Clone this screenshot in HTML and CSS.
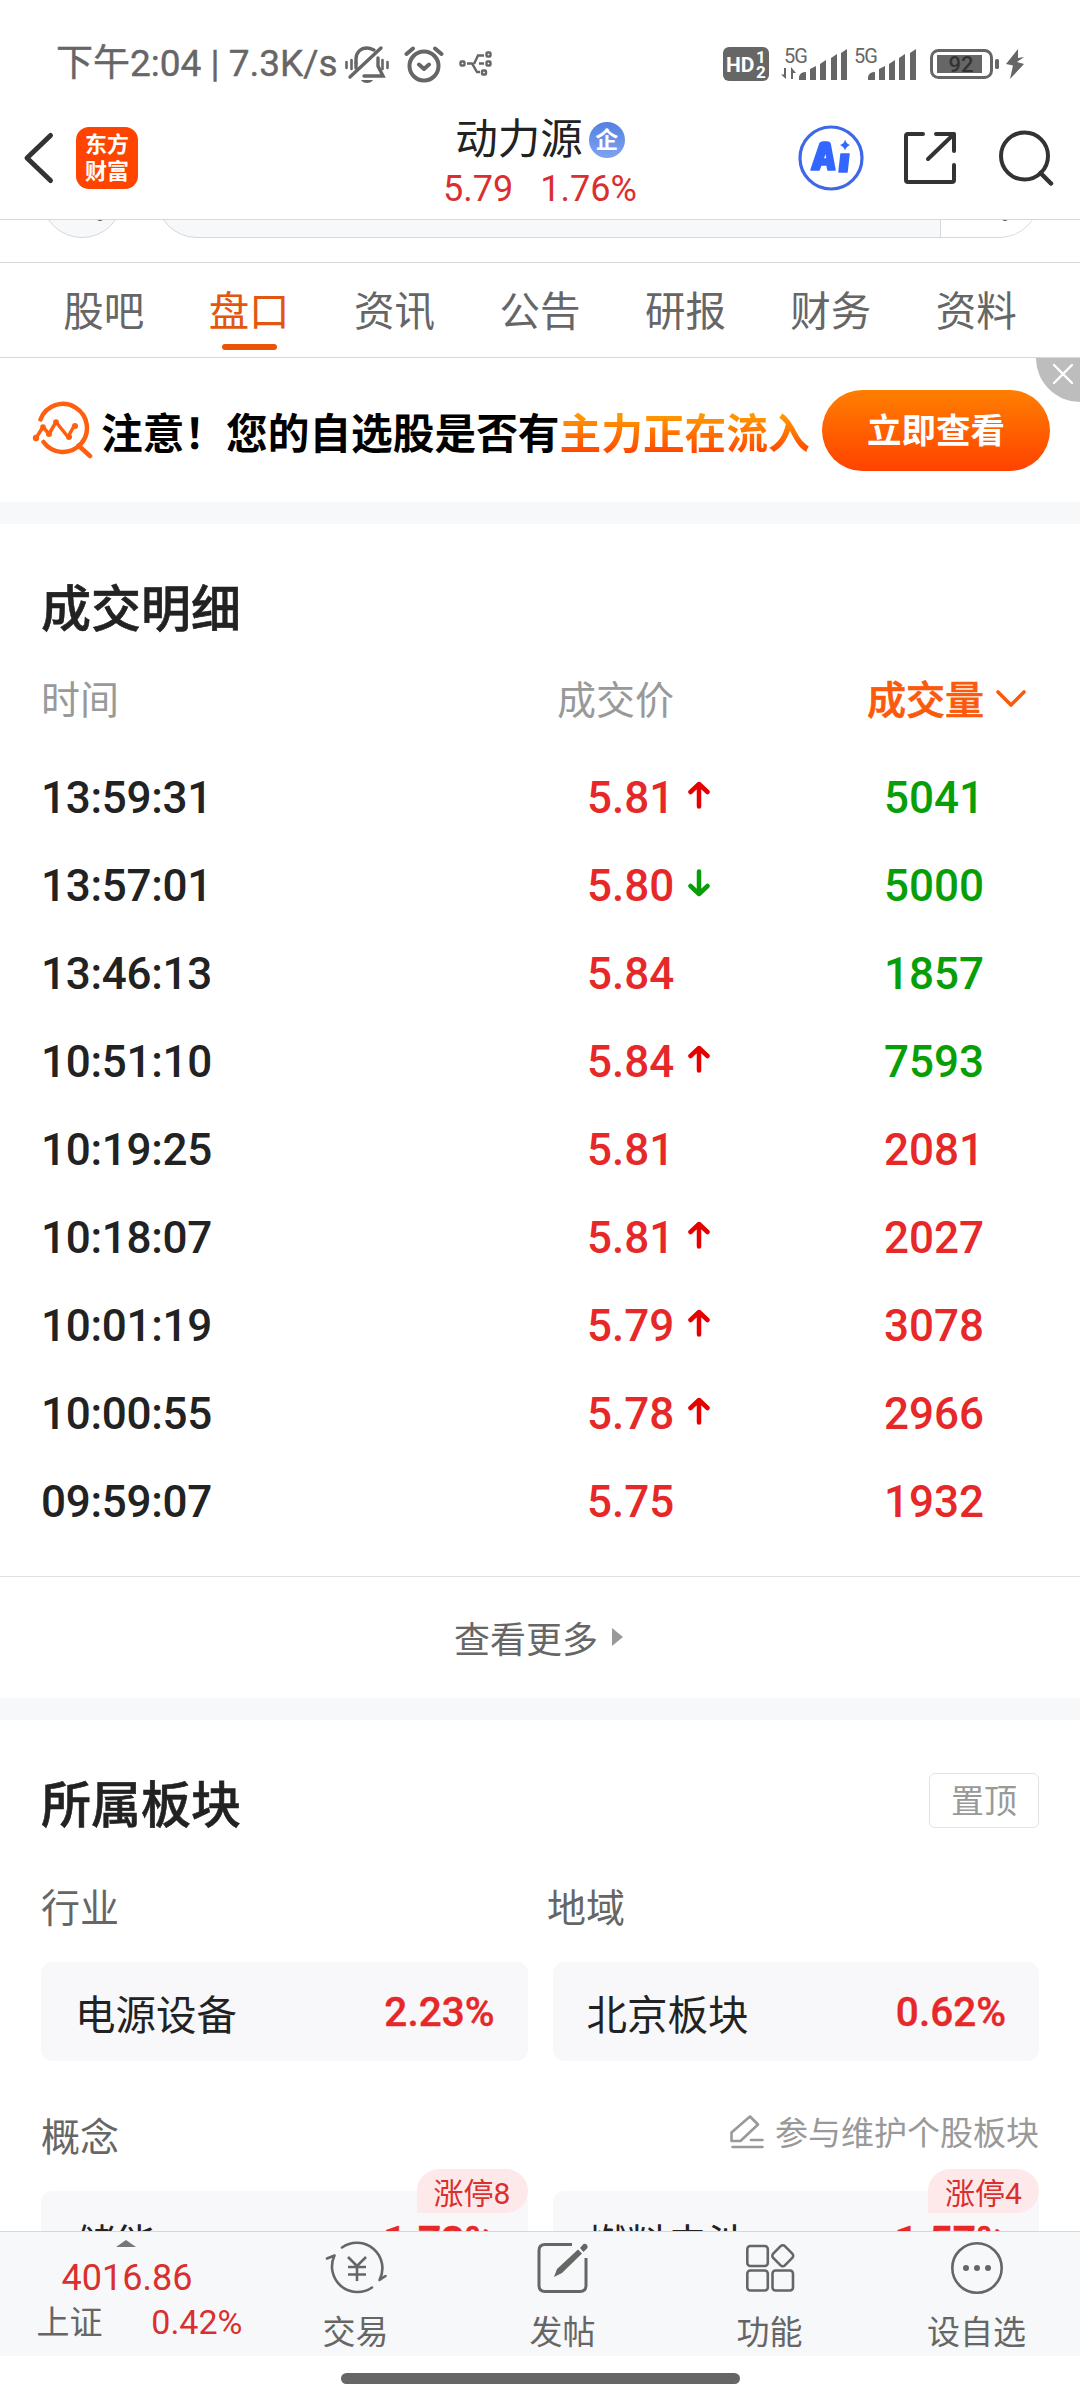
FILE: index.html
```html
<!DOCTYPE html>
<html lang="zh-CN">
  <head>
    <meta charset="UTF-8" />
    <meta name="viewport" content="width=device-width, initial-scale=1.0" />
    <title>动力源</title>
    <link rel="stylesheet" href="styles.css">
  </head>

  <body>
    <!-- 状态栏 -->
    <div class="status">
      <span class="status-text">下午2:04 | 7.3K/s</span>
      <svg class="ico-bell" width="46" height="40" viewBox="0 0 46 40" fill="none" stroke="#666" stroke-width="3.4" stroke-linecap="round">
        <path d="M6 33 37 4" />
        <path d="M12 19v-4c0-7 5-11 11-11 3 0 5 1 7 2" />
        <path d="M34 14v8l5 10H20" />
        <path d="M12 19v5" />
        <path d="M2.500 18v6M7.500 16v9M38.500 16v9M43.500 18v6" stroke-width="2.600" />
        <path d="M17 36h12c-2 4-10 4-12 0z" fill="#666" stroke="none" />
      </svg>
      <svg class="ico-alarm" width="40" height="38" viewBox="0 0 40 38" fill="none" stroke="#666" stroke-width="4" stroke-linecap="round" stroke-linejoin="round">
        <circle cx="20" cy="21" r="14.500" />
        <path d="M15 19.500l5 4.500 5-4.500M2.500 9 9 3.500M37.500 9 31 3.500" />
      </svg>
      <svg class="ico-hub" width="34" height="26" viewBox="0 0 34 26" fill="none" stroke="#666" stroke-width="2.400">
        <rect x="1.500" y="10.500" width="4" height="4" rx="1" />
        <rect x="27.500" y="1.500" width="4" height="4" rx="1" />
        <rect x="27.500" y="10.500" width="4" height="4" rx="1" />
        <rect x="23" y="19.500" width="4" height="4" rx="1" />
        <path d="M8 12.500h5l5 8.500h3M15 13l4-8.500h6M20 12.500h5" />
      </svg>
      <div class="status-right">
        <svg width="46" height="34" viewBox="0 0 46 34">
          <rect width="46" height="34" rx="6" fill="#666" />
          <text x="3" y="25" class="hd-text">HD</text>
          <text x="33" y="16" class="hd-num">1</text>
          <text x="33" y="30.500" class="hd-num">2</text>
        </svg>
        <svg class="ico-signal" width="66" height="34" viewBox="0 0 66 34" fill="#666">
          <text x="3" y="16" class="net-text">5G</text>
          <path d="M5 21v11L0 27.500h3V21zM10 32V20l5 6h-3v6z" />
          <path d="M18 33v-3q1-5 7-5v8zM29 33V22l6-3v14zM39 33V17l6-4v20zM50 33V11l6-4v26zM60 33V6l6-4v31z" />
        </svg>
        <svg class="ico-signal2" width="63" height="34" viewBox="0 0 63 34" fill="#666">
          <text x="0" y="16" class="net-text">5G</text>
          <path d="M14 33v-3q1-5 7-5v8zM25 33V22l6-3v14zM35 33V17l6-4v20zM45 33V11l6-4v26zM56 33V6l6-4v31z" />
        </svg>
        <svg class="ico-battery" width="96" height="32" viewBox="0 0 96 32">
          <rect x="1.500" y="2.500" width="60" height="27" rx="7" fill="none" stroke="#666" stroke-width="3" />
          <rect x="7" y="7" width="45" height="18" fill="#666" />
          <rect x="65" y="11" width="4" height="10" rx="1.500" fill="#666" />
          <text x="18.500" y="24" class="battery-text">92</text>
          <path d="M88 1 76 16l7 1.500L80 31l14-15-7-2 7-5-6 1z" fill="#666" />
        </svg>
      </div>
    </div>

    <!-- 顶部导航 -->
    <header class="header">
      <div class="header-side">
        <svg class="ico-back" width="32" height="54" viewBox="0 0 32 54" fill="none" stroke="#333" stroke-width="5" stroke-linecap="round" stroke-linejoin="round">
          <path d="M27.500 4.500 4 27l23.500 22.500" />
        </svg>
        <div class="logo">东方<br />财富</div>
      </div>
      <div class="stock">
        <div class="stock-name">动力源<span class="badge-co">企</span></div>
        <div class="stock-price"><span>5.79</span><span>1.76%</span></div>
      </div>
      <div class="header-side header-right">
        <svg width="66" height="68" viewBox="0 0 66 68">
          <circle cx="33" cy="34" r="31" fill="none" stroke="#3f68e8" stroke-width="3.200" />
          <path fill="#3366ff" fill-rule="evenodd" stroke="#3366ff" stroke-width="1.500" stroke-linejoin="round" d="M13 46 22 19.500q1-1.500 3-1.500h4q2.500 0 3 1.500L37 46h-7l-1-5h-6l-2 5zM25 35h4l-1-8zM43 30h8l-2 18h-8z" />
          <path fill="#3366ff" d="M47 15.500q1.500 4.500 5 5.500-4 1.500-5 5.500-1-4-5-5.500 4-1 5-5.500z" />
        </svg>
        <svg class="ico-share" width="54" height="54" viewBox="0 0 54 54" fill="none" stroke="#333" stroke-width="4" stroke-linecap="round" stroke-linejoin="round">
          <path d="M20 3H5q-2 0-2 2v44q0 2 2 2h44q2 0 2-2V34M33 3h18v17M51 3 25 28" />
        </svg>
        <svg class="ico-search" width="56" height="56" viewBox="0 0 56 56" fill="none" stroke="#333" stroke-width="4" stroke-linecap="round">
          <circle cx="26.500" cy="26" r="23.500" />
          <path d="M42.500 43 53 53.500" stroke-width="4.500" />
        </svg>
      </div>
    </header>

    <!-- 滚动到一半的工具栏 -->
    <div class="tools">
      <div class="tool-round"><i></i></div>
      <div class="tool-pill">
        <div class="tool-pill-end"><i></i></div>
      </div>
    </div>

    <nav class="tabs">
      <a class="tab">股吧</a>
      <a class="tab on">盘口</a>
      <a class="tab">资讯</a>
      <a class="tab">公告</a>
      <a class="tab">研报</a>
      <a class="tab">财务</a>
      <a class="tab">资料</a>
    </nav>

    <main class="content">
      <div class="banner">
        <svg class="banner-ico" width="62" height="60" viewBox="0 0 62 60" fill="none" stroke="#ff5f0f" stroke-width="4.500" stroke-linecap="round" stroke-linejoin="round">
          <path d="M8.500 18.500a24 24 0 1 1 3 22.500M46.500 44.500 58 55" />
          <path d="M4 37 11 26l6 7 7-12 12 15 6-11" stroke-width="3.500" />
          <g fill="#ff5f0f" stroke="none">
            <circle cx="4" cy="37" r="3.200" />
            <circle cx="11" cy="26" r="2.800" />
            <circle cx="17" cy="33" r="3" />
            <circle cx="24" cy="21" r="2.800" />
            <circle cx="37" cy="36" r="3" />
            <circle cx="43" cy="25" r="3" />
          </g>
        </svg>
        <p class="banner-text">注意！您的自选股是否有<em>主力正在流入</em></p>
        <button type="button" class="banner-btn">立即查看</button>
        <div class="banner-close">
          <svg width="22" height="22" viewBox="0 0 22 22" stroke="#fff" stroke-width="2.400" stroke-linecap="round">
            <path d="M2 2l18 18M20 2 2 20" />
          </svg>
        </div>
      </div>

      <!-- 成交明细 -->
      <section class="card deals">
        <h2>成交明细</h2>
        <div class="deal-row deal-head">
          <span>时间</span>
          <span>成交价</span>
          <span class="sort">成交量
            <svg width="30" height="20" viewBox="0 0 30 20" fill="none" stroke="#fa5a0a" stroke-width="3.600" stroke-linecap="round" stroke-linejoin="round">
              <path d="M2 3l13 13L28 3" />
            </svg>
          </span>
        </div>
        <div id="dealList"></div>
      </section>
      <a class="more">查看更多<i></i></a>

      <!-- 所属板块 -->
      <section class="card plates">
        <div class="plates-head">
          <h2>所属板块</h2>
          <button type="button" class="btn-top">置顶</button>
        </div>
        <div class="labels">
          <span>行业</span>
          <span>地域</span>
        </div>
        <div class="plate-list">
          <div class="plate"><span>电源设备</span><b>2.23%</b></div>
          <div class="plate"><span>北京板块</span><b>0.62%</b></div>
        </div>
        <div class="labels concept">
          <span>概念</span>
          <a class="edit">
            <svg width="34" height="34" viewBox="0 0 34 34" fill="none" stroke="#999" stroke-width="2.600" stroke-linecap="round" stroke-linejoin="round">
              <path d="M1.500 17.500 20 1.500l8 8L10.500 26h-9zM21 25h11.500M2.500 32h30" />
            </svg>参与维护个股板块</a>
        </div>
        <div class="plate-list">
          <div class="plate"><span>储能</span><b class="bold">1.73%</b><i class="limit">涨停8</i></div>
          <div class="plate"><span>燃料电池</span><b class="bold">1.57%</b><i class="limit">涨停4</i></div>
        </div>
      </section>
    </main>

    <!-- 底部栏 -->
    <footer class="bottom">
      <div class="index">
        <i class="index-up"></i>
        <div class="index-num">4016.86</div>
        <div class="index-row"><span>上证</span><span class="red">0.42%</span></div>
      </div>
      <a class="menu">
        <svg width="62" height="56" viewBox="0 0 62 56" fill="none" stroke="#666" stroke-width="2.600" stroke-linecap="round" stroke-linejoin="round">
          <path d="M17 7.500a25.500 25.500 0 0 1 37.500 32.500l6-4M47 47.500A25.500 25.500 0 0 1 9.500 15.500l-7.500 3" />
          <path d="M23 17l9 9 9-9M32 26v15M23 27h18M23 34.500h18" stroke-linecap="butt" />
        </svg>
        <span>交易</span>
      </a>
      <a class="menu">
        <svg width="54" height="56" viewBox="0 0 54 56" fill="none" stroke="#666" stroke-width="3">
          <path d="M36 4.500H9q-6 0-6 6v35q0 6 6 6h35q6 0 6-6V18" />
          <path d="M18 37l3-8L42 9.500l4 4L26 33z" fill="#666" stroke="none" />
          <path d="M44 8l3.500-4q2-1 3.500 1t0 3.500L47.500 12z" fill="#666" stroke="none" />
        </svg>
        <span>发帖</span>
      </a>
      <a class="menu">
        <svg width="52" height="56" viewBox="0 0 52 56" fill="none" stroke="#666" stroke-width="2.600">
          <rect x="3.300" y="6" width="20.500" height="20" rx="3" />
          <rect x="3.300" y="30.500" width="20.500" height="20" rx="3" />
          <rect x="28.500" y="30.500" width="20.500" height="20" rx="3" />
          <rect x="30.500" y="7.500" width="16.500" height="16.500" rx="3" transform="rotate(45 38.750 15.750)" />
        </svg>
        <span>功能</span>
      </a>
      <a class="menu">
        <svg width="54" height="56" viewBox="0 0 54 56" fill="#666">
          <circle cx="27" cy="28" r="24.700" fill="none" stroke="#666" stroke-width="2.600" />
          <circle cx="16" cy="28" r="3" />
          <circle cx="27" cy="28" r="3" />
          <circle cx="38" cy="28" r="3" />
        </svg>
        <span>设自选</span>
      </a>
    </footer>
    <div class="home"><i></i></div>

    <script>
      // [时间, 成交价, 箭头, 成交量, 买卖方向]
      const deals = [
        ["13:59:31", "5.81", "up", "5041", "green"],
        ["13:57:01", "5.80", "down", "5000", "green"],
        ["13:46:13", "5.84", "", "1857", "green"],
        ["10:51:10", "5.84", "up", "7593", "green"],
        ["10:19:25", "5.81", "", "2081", "red"],
        ["10:18:07", "5.81", "up", "2027", "red"],
        ["10:01:19", "5.79", "up", "3078", "red"],
        ["10:00:55", "5.78", "up", "2966", "red"],
        ["09:59:07", "5.75", "", "1932", "red"],
      ];

      const arrow = function (type) {
        if (!type) return "";
        return `<svg class="arrow ${type}" width="22" height="28" viewBox="0 0 22 28"><path d="M11 25.500V3M2.500 11 11 3l8.500 8" /></svg>`;
      };

      document.querySelector("#dealList").innerHTML = deals
        .map(
          ([time, price, type, volume, color]) => `
        <div class="deal-row">
          <span class="time">${time}</span>
          <span class="price"><b>${price}</b>${arrow(type)}</span>
          <span class="volume ${color}">${volume}</span>
        </div>`
        )
        .join("");
    </script>
  </body>
</html>
```

FILE: styles.css
```css
* {
  box-sizing: border-box;
}

body {
  margin: 0;
  width: 1080px;
  height: 2400px;
  overflow: hidden;
  display: flex;
  flex-direction: column;
  background: #fff;
  color: #222;
  font-family: Roboto, "Noto Sans CJK SC", sans-serif;
}

h2,
p {
  margin: 0;
}

i,
em {
  font-style: normal;
}

svg {
  display: block;
  flex: none;
}

button {
  border: none;
  font-family: inherit;
  padding: 0;
}

.red {
  color: #e62828;
}

.green {
  color: #079e07;
}

/* 状态栏 */
.status {
  flex: none;
  height: 84px;
  padding: 44px 54px 0 56px;
  display: flex;
  align-items: center;
  color: #666;
}

.status-text {
  width: 288px;
  font-size: 37px;
  line-height: 40px;
  white-space: nowrap;
  -webkit-text-stroke: 0.4px #666;
}

.ico-alarm {
  margin-left: 14px;
}

.ico-hub {
  margin-left: 15px;
}

.status-right {
  margin-left: auto;
  display: flex;
  align-items: center;
}

.ico-signal {
  margin-left: 12px;
}

.ico-signal2 {
  margin-left: 7px;
}

.ico-battery {
  margin-left: 13px;
}

.hd-text {
  font: 700 21px Roboto;
  fill: #fff;
}

.hd-num {
  font: 700 17px Roboto;
  fill: #fff;
}

.net-text {
  font: 20px Roboto;
  letter-spacing: -1px;
}

.battery-text {
  font: 500 22px Roboto;
  fill: #333;
}

/* 顶部导航 */
.header {
  flex: none;
  height: 136px;
  padding: 13px 26px 0 23px;
  border-bottom: 1px solid #d5d7da;
  display: flex;
  align-items: center;
  justify-content: space-between;
}

.header-side {
  width: 256px;
  display: flex;
  align-items: center;
}

.header-right {
  justify-content: flex-end;
}

.logo {
  width: 62px;
  height: 62px;
  margin-left: 21px;
  padding-top: 5px;
  border-radius: 13px;
  background: #ff4400;
  color: #fff;
  font-size: 22px;
  font-weight: 700;
  line-height: 26.5px;
  text-align: center;
}

.stock {
  padding: 6px 0 0 3px;
  text-align: center;
}

.stock-name {
  display: flex;
  align-items: center;
  justify-content: center;
  font-size: 42.5px;
  line-height: 58px;
}

.badge-co {
  width: 36px;
  height: 36px;
  margin-left: 6px;
  border-radius: 50%;
  background: linear-gradient(#5580e2, #7ea3f0);
  color: #fff;
  font-size: 23px;
  font-weight: 700;
  line-height: 37px;
}

.stock-price {
  display: flex;
  justify-content: center;
  gap: 27px;
  margin-top: -2px;
  font-size: 36px;
  line-height: 44px;
  color: #d9302f;
}

.ico-share {
  margin-left: 39px;
}

.ico-search {
  margin-left: 41px;
}

/* 工具栏 */
.tools {
  flex: none;
  height: 43px;
  padding: 0 40px 24px 41px;
  border-bottom: 1px solid #d5d7da;
  display: flex;
  align-items: flex-end;
  overflow: hidden;
}

.tool-round {
  flex: none;
  width: 82px;
  height: 82px;
  margin-right: 33px;
  border: 1px solid #d5d7da;
  border-radius: 50%;
  background: #f7f8fa;
  padding: 60px 0 0 55px;
}

.tool-round i,
.tool-pill-end i {
  display: block;
  width: 6px;
  height: 4px;
  border-radius: 0 0 3px 3px;
  background: #555;
}

.tool-pill {
  flex: 1;
  height: 82px;
  border: 1px solid #d5d7da;
  border-radius: 41px;
  background: #f7f8fa;
  overflow: hidden;
  display: flex;
  justify-content: flex-end;
}

.tool-pill-end {
  width: 99px;
  border-left: 1px solid #d5d7da;
  background: #fff;
  padding: 60px 0 0 61px;
}

/* 标签页 */
.tabs {
  flex: none;
  height: 95px;
  padding: 0 31px;
  border-bottom: 1px solid #d5d7da;
  display: flex;
}

.tab {
  flex: 1;
  display: flex;
  flex-direction: column;
  align-items: center;
  padding-top: 20px;
  font-size: 40.5px;
  line-height: 58px;
  color: #666;
}

.tab.on {
  color: #e2570f;
}

.tab.on::after {
  content: "";
  width: 55px;
  height: 6px;
  margin-top: 3px;
  border-radius: 3px;
  background: #e95504;
}

/* 主体 */
.content {
  flex: 1;
  min-height: 0;
  overflow: hidden;
}

.banner {
  position: relative;
  height: 144px;
  padding: 5px 30px 0 32px;
  display: flex;
  align-items: center;
}

.banner-ico {
  margin-bottom: 3px;
}

.banner-text {
  width: 718px;
  padding: 4px 0 0 7px;
  font-size: 41.7px;
  font-weight: 700;
  line-height: 56px;
  white-space: nowrap;
  color: #000;
}

.banner-text em {
  background: linear-gradient(#ff9500 15%, #ff4a00 85%);
  -webkit-background-clip: text;
  background-clip: text;
  color: transparent;
}

.banner-btn {
  width: 228px;
  height: 81px;
  margin-left: 10px;
  margin-bottom: 5px;
  padding-bottom: 4px;
  border-radius: 41px;
  background: linear-gradient(#ff7f00, #ff4200);
  color: #fff;
  font-size: 34.5px;
  font-weight: 700;
}

.banner-close {
  position: absolute;
  top: 0;
  right: 0;
  width: 44px;
  height: 44px;
  padding: 5px 0 0 16px;
  border-bottom-left-radius: 44px;
  background: #bdbdbd;
}

.card {
  border-top: 22px solid #f7f8fa;
  padding: 53px 41px 0;
}

.card h2 {
  padding-top: 3px;
  height: 60px;
  font-size: 50px;
  font-weight: 500;
  line-height: 60px;
  -webkit-text-stroke: 0.6px #222;
}

/* 成交明细 */
.deals {
  padding-bottom: 31px;
}

.deal-row {
  display: grid;
  grid-template-columns: 546px 297px 1fr;
  align-items: center;
  height: 88px;
  padding-top: 1px;
  font-size: 44px;
  font-weight: 500;
}

.time {
  letter-spacing: -0.3px;
}

.deal-head {
  grid-template-columns: 516px 310px 1fr;
  height: 48px;
  margin: 38px 0 30px;
  padding-top: 2px;
  font-size: 39px;
  font-weight: 400;
  line-height: 48px;
  color: #999;
}

.sort {
  display: flex;
  align-items: center;
  gap: 12px;
  font-weight: 500;
  color: #fa5a0a;
  -webkit-text-stroke: 0.7px #fa5a0a;
}

.sort svg {
  margin-bottom: 4px;
}

.price {
  display: flex;
  align-items: center;
  color: #e62828;
}

.price b {
  width: 101px;
  font-weight: 500;
}

.arrow {
  margin-bottom: 6px;
  fill: none;
  stroke: #e60000;
  stroke-width: 4.5;
  stroke-linecap: round;
  stroke-linejoin: round;
}

.arrow.down {
  stroke: #079e07;
  transform: rotate(180deg);
}

.more {
  display: flex;
  align-items: center;
  justify-content: center;
  gap: 14px;
  height: 122px;
  padding: 0 3px 1px 0;
  border-top: 1px solid #dfe0e2;
  font-size: 36px;
  color: #666;
}

.more i {
  border-left: 11px solid #999;
  border-top: 9px solid transparent;
  border-bottom: 9px solid transparent;
}

/* 所属板块 */
.plates-head {
  display: flex;
  justify-content: space-between;
}

.btn-top {
  width: 110px;
  height: 55px;
  padding-top: 3px;
  border: 1px solid #e3e3e3;
  border-radius: 6px;
  background: #fff;
  font-size: 33px;
  line-height: 50px;
  color: #999;
}

.labels {
  display: grid;
  grid-template-columns: 506px 1fr;
  margin: 52px 0 29px;
  font-size: 39px;
  line-height: 48px;
  color: #666;
}

.concept {
  display: flex;
  justify-content: space-between;
  margin-top: 53px;
}

.edit {
  display: flex;
  align-items: center;
  gap: 11px;
  height: 40px;
  font-size: 33px;
  color: #999;
}

.edit svg {
  margin-bottom: 5px;
}

.plate-list {
  display: grid;
  grid-template-columns: 1fr 1fr;
  gap: 25px;
}

.plate {
  position: relative;
  display: flex;
  align-items: center;
  justify-content: space-between;
  height: 99px;
  padding: 1px 33px 0 34px;
  border-radius: 11px;
  background: #f8f8fb;
  font-size: 40.5px;
}

.plate b {
  font-size: 40.5px;
  font-weight: 500;
  color: #e62828;
  -webkit-text-stroke: 0.4px #e62828;
}

.plate .bold {
  font-weight: 700;
}

.limit {
  position: absolute;
  top: -22px;
  right: 0;
  width: 111px;
  height: 44px;
  border-radius: 22px 22px 22px 0;
  background: #fde9e9;
  font-size: 30px;
  line-height: 49px;
  text-align: center;
  color: #d9302f;
}

/* 底部栏 */
.bottom {
  flex: none;
  height: 125px;
  border-top: 1px solid #d5d7da;
  background: #f7f8fa;
  display: grid;
  grid-template-columns: 252px repeat(4, 1fr);
  color: #666;
}

.index {
  display: flex;
  flex-direction: column;
  align-items: center;
  padding-top: 8px;
}

.index-up {
  border-bottom: 7px solid #777;
  border-left: 10px solid transparent;
  border-right: 10px solid transparent;
}

.index-num {
  margin-top: 9px;
  padding-left: 2px;
  font-size: 36px;
  line-height: 44px;
  color: #d9302f;
}

.index-row {
  width: 206px;
  margin-left: 27px;
  display: flex;
  justify-content: space-between;
  font-size: 33px;
  line-height: 46px;
}

.index-row .red {
  font-size: 34px;
  line-height: 44px;
  color: #d9302f;
}

.menu {
  display: flex;
  flex-direction: column;
  align-items: center;
  padding-top: 8px;
  font-size: 33px;
  line-height: 46px;
}

.menu span {
  margin-top: 14px;
}

.home {
  flex: none;
  height: 44px;
  padding-top: 17px;
}

.home i {
  display: block;
  width: 399px;
  height: 11px;
  margin: 0 auto;
  border-radius: 6px;
  background: #666;
}
```
